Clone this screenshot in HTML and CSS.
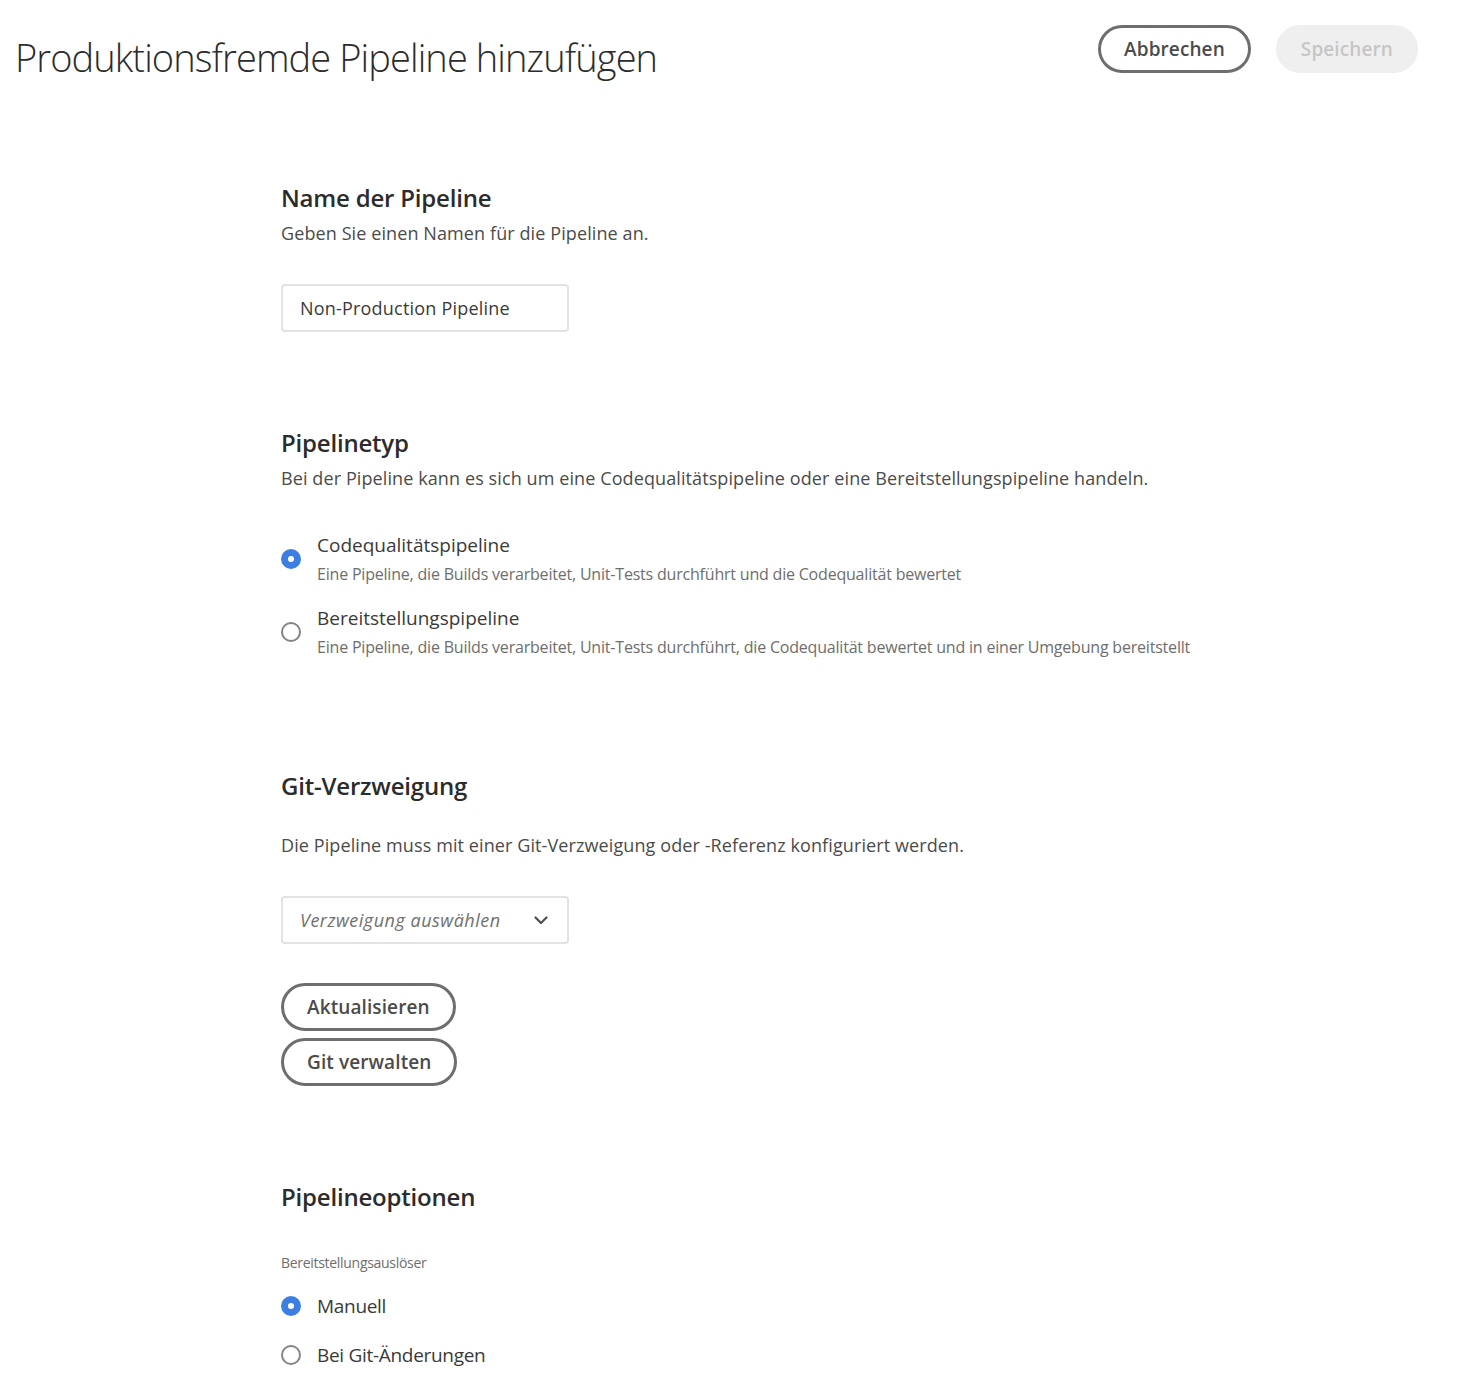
FILE: index.html
```html
<!DOCTYPE html>
<html lang="de">
<head>
<meta charset="utf-8">
<title>Produktionsfremde Pipeline hinzufügen</title>
<link rel="stylesheet" href="styles.css">
</head>
<body>
<header class="header">
  <h1 class="title">Produktionsfremde Pipeline hinzufügen</h1>
  <div class="actions">
    <button class="btn btn-outline">Abbrechen</button>
    <button class="btn btn-disabled" disabled>Speichern</button>
  </div>
</header>
<main class="main">
  <section class="section sec-name">
    <h2 class="heading">Name der Pipeline</h2>
    <p class="desc">Geben Sie einen Namen für die Pipeline an.</p>
    <div class="field">Non-Production Pipeline</div>
  </section>

  <section class="section sec-type">
    <h2 class="heading">Pipelinetyp</h2>
    <p class="desc">Bei der Pipeline kann es sich um eine Codequalitätspipeline oder eine Bereitstellungspipeline handeln.</p>
    <div class="radio-group">
      <div class="radio-opt">
        <span class="radio checked"></span>
        <div class="radio-text">
          <div class="radio-label">Codequalitätspipeline</div>
          <div class="radio-sub">Eine Pipeline, die Builds verarbeitet, Unit-Tests durchführt und die Codequalität bewertet</div>
        </div>
      </div>
      <div class="radio-opt">
        <span class="radio"></span>
        <div class="radio-text">
          <div class="radio-label">Bereitstellungspipeline</div>
          <div class="radio-sub">Eine Pipeline, die Builds verarbeitet, Unit-Tests durchführt, die Codequalität bewertet und in einer Umgebung bereitstellt</div>
        </div>
      </div>
    </div>
  </section>

  <section class="section sec-git">
    <h2 class="heading">Git-Verzweigung</h2>
    <p class="desc desc-git">Die Pipeline muss mit einer Git-Verzweigung oder -Referenz konfiguriert werden.</p>
    <div class="field select">
      <span class="placeholder">Verzweigung auswählen</span>
      <svg class="chevron" width="14" height="9" viewBox="0 0 14 9"><path d="M1.5 1.5 L7 7 L12.5 1.5" fill="none" stroke="#505050" stroke-width="2.2" stroke-linecap="round" stroke-linejoin="round"/></svg>
    </div>
    <div class="git-buttons">
      <button class="btn btn-outline">Aktualisieren</button>
      <button class="btn btn-outline">Git verwalten</button>
    </div>
  </section>

  <section class="section sec-opts">
    <h2 class="heading">Pipelineoptionen</h2>
    <div class="small-label">Bereitstellungsauslöser</div>
    <div class="simple-radio first">
      <span class="radio checked"></span>
      <span class="simple-label">Manuell</span>
    </div>
    <div class="simple-radio second">
      <span class="radio"></span>
      <span class="simple-label">Bei Git-Änderungen</span>
    </div>
  </section>
</main>
</body>
</html>
```

FILE: styles.css
```css
* { box-sizing: border-box; }
body {
  margin: 0;
  background: #fff;
  font-family: "Open Sans", "Noto Sans", sans-serif;
  color: #2c2c2c;
}
.header {
  display: flex;
  justify-content: space-between;
  align-items: flex-start;
  padding: 25px 46px 0 15px;
}
.title {
  margin: 8px 0 0 0;
  font-size: 38px;
  line-height: 48px;
  font-weight: 300;
  color: #2c2c2c;
  letter-spacing: -0.9px;
}
.actions {
  display: flex;
  gap: 25px;
}
.btn {
  height: 48px;
  border-radius: 24px;
  font-family: inherit;
  font-size: 19px;
  font-weight: 600;
  padding: 0 23px;
  letter-spacing: 0.1px;
  cursor: pointer;
}
.btn-outline {
  background: #fff;
  border: 3px solid #6e6e6e;
  color: #4b4b4b;
}
.btn-disabled {
  background: #efefef;
  border: 3px solid #efefef;
  color: #c6c6c6;
  padding: 0 22px;
}
.main {
  padding-left: 281px;
}
.section { margin: 0; }
.sec-name { padding-top: 101px; }
.sec-type { padding-top: 95px; }
.sec-git { padding-top: 112px; }
.sec-opts { padding-top: 95px; }
.heading {
  margin: 0;
  font-size: 24px;
  line-height: 32px;
  font-weight: 600;
  color: #2c2c2c;
  letter-spacing: -0.2px;
}
.desc {
  margin: 6px 0 0 0;
  font-size: 18px;
  line-height: 26px;
  color: #4b4b4b;
  letter-spacing: 0.1px;
}
.desc-git { margin-top: 30px; }
.field {
  margin-top: 38px;
  width: 288px;
  height: 48px;
  border: 2px solid #e3e3e3;
  border-radius: 4px;
  display: flex;
  align-items: center;
  padding: 0 17px;
  font-size: 18px;
  color: #3a3a3a;
  letter-spacing: 0.2px;
}
.select {
  justify-content: space-between;
  padding-right: 19px;
}
.placeholder {
  font-style: italic;
  color: #707070;
  letter-spacing: 0.5px;
}
.chevron { display: block; }
.radio-group {
  margin-top: 41px;
  display: flex;
  flex-direction: column;
  gap: 20px;
}
.radio-opt {
  display: flex;
  align-items: center;
  gap: 16px;
}
.radio {
  flex: none;
  width: 20px;
  height: 20px;
  border-radius: 50%;
  border: 2px solid #848484;
  background: #fff;
  display: inline-block;
  margin-top: 1px;
}
.radio.checked {
  border: 7px solid #3d7fe0;
  background: #fff;
}
.radio-label {
  font-size: 19px;
  line-height: 26px;
  font-weight: 500;
  color: #3a3a3a;
  letter-spacing: 0;
}
.radio-sub {
  margin-top: 5px;
  font-size: 16px;
  line-height: 22px;
  color: #6e6e6e;
  letter-spacing: -0.2px;
}
.git-buttons {
  margin-top: 39px;
  display: flex;
  flex-direction: column;
  align-items: flex-start;
  gap: 7px;
}
.small-label {
  margin-top: 40px;
  font-size: 14px;
  line-height: 20px;
  color: #6e6e6e;
  letter-spacing: -0.3px;
}
.simple-radio {
  display: flex;
  align-items: center;
  gap: 16px;
  height: 26px;
}
.simple-radio .radio { margin-top: 0; }
.simple-radio.first { margin-top: 20px; }
.simple-radio.second { margin-top: 23px; }
.simple-label {
  font-size: 19px;
  line-height: 26px;
  color: #3a3a3a;
  letter-spacing: -0.3px;
}
```
